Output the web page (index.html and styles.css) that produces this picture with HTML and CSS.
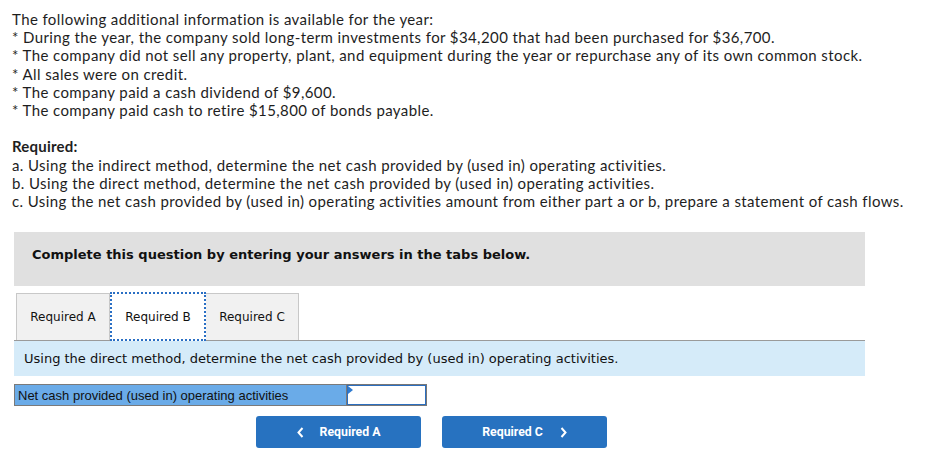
FILE: index.html
```html
<!DOCTYPE html>
<html>
<head>
<meta charset="utf-8">
<link rel="stylesheet" href="styles.css">
</head>
<body>
<div class="page">
  <div class="intro">
    <p>The following additional information is available for the year:<br>
    * During the year, the company sold long-term investments for $34,200 that had been purchased for $36,700.<br>
    * The company did not sell any property, plant, and equipment during the year or repurchase any of its own common stock.<br>
    * All sales were on credit.<br>
    * The company paid a cash dividend of $9,600.<br>
    * The company paid cash to retire $15,800 of bonds payable.</p>
    <p class="req"><strong>Required:</strong><br>
    a. Using the indirect method, determine the net cash provided by (used in) operating activities.<br>
    b. Using the direct method, determine the net cash provided by (used in) operating activities.<br>
    c. Using the net cash provided by (used in) operating activities amount from either part a or b, prepare a statement of cash flows.</p>
  </div>
  <div class="notice">Complete this question by entering your answers in the tabs below.</div>
  <div class="tabs">
    <div class="tab">Required A</div>
    <div class="tab active">Required B</div>
    <div class="tab">Required C</div>
  </div>
  <div class="prompt">Using the direct method, determine the net cash provided by (used in) operating activities.</div>
  <div class="row">
    <div class="label">Net cash provided (used in) operating activities</div>
    <div class="input"><span class="marker"></span></div>
  </div>
  <div class="nav">
    <button class="btn"><svg class="chev left" width="7" height="11" viewBox="0 0 7 11"><polyline points="5.5,1 1.5,5.5 5.5,10" fill="none" stroke="#fff" stroke-width="2"/></svg>Required A</button>
    <button class="btn">Required C<svg class="chev right" width="7" height="11" viewBox="0 0 7 11"><polyline points="1.5,1 5.5,5.5 1.5,10" fill="none" stroke="#fff" stroke-width="2"/></svg></button>
  </div>
</div>
</body>
</html>
```

FILE: styles.css
```css
html, body { margin: 0; padding: 0; background: #fff; }
.page { padding: 10px 0 0 14px; width: 851px; }
.intro { margin-left: -2px; white-space: nowrap; font-family: "Lato", "Liberation Sans", sans-serif; font-size: 15px; letter-spacing: 0.4px; line-height: 18.2px; color: #1e1e1e; }
.intro p { margin: 0; }
.intro p.req { margin-top: 18.2px; }
.intro strong { font-weight: bold; letter-spacing: 0.2px; }
.notice { margin-top: 22px; background: #e0e0e0; height: 54px; box-sizing: border-box; padding: 15px 0 0 18px; line-height: 16px; font-family: "DejaVu Sans", Verdana, sans-serif; font-weight: bold; font-size: 13px; color: #111; }
.tabs { display: flex; margin-top: 6px; padding-left: 2px; height: 48px; align-items: flex-end; border-bottom: 1px solid #9a9a9a; }
.tab { height: 47px; box-sizing: border-box; background: #f1f1f1; border: 1px solid #c8c8c8; border-bottom: none; display: flex; align-items: center; justify-content: center; font-family: "DejaVu Sans", Verdana, sans-serif; font-size: 12px; color: #111; }
.tab:nth-child(1) { width: 94px; }
.tab:nth-child(2) { width: 96px; height: 49px; margin-bottom: -1px; background: #fff; border: 2px dotted #2a6fc4; }
.tab:nth-child(3) { width: 93px; border-left: none; }
.prompt { background: #d5ebf9; height: 35px; box-sizing: border-box; padding-left: 10px; display: flex; align-items: center; font-family: "DejaVu Sans", Verdana, sans-serif; font-size: 13px; color: #111; }
.row { display: flex; margin-top: 8px; height: 22px; }
.label { width: 333px; box-sizing: border-box; background: #6aabe8; border: 1px solid #7a7a7a; padding-left: 3px; display: flex; align-items: center; font-family: "Liberation Sans", Arial, sans-serif; font-size: 13px; color: #111; }
.input { position: relative; width: 80px; box-sizing: border-box; background: #fff; border: 1px solid #777; border-left: none; box-shadow: inset 0 0 0 1px #2c6fbf; }
.marker { position: absolute; left: 1px; top: 1px; width: 0; height: 0; border-top: 4px solid transparent; border-bottom: 4px solid transparent; border-left: 5px solid #2e7ad0; }
.nav { display: flex; margin-top: 10px; padding-left: 242px; gap: 21px; }
.btn { width: 165px; height: 32px; border: none; border-radius: 3px; background: #2772c0; color: #fff; font-family: "Roboto", "Liberation Sans", sans-serif; font-weight: bold; font-size: 12.3px; display: flex; align-items: center; justify-content: center; padding: 0; }
.chev.left { margin-right: 16px; }
.chev.right { margin-left: 17px; }
```
